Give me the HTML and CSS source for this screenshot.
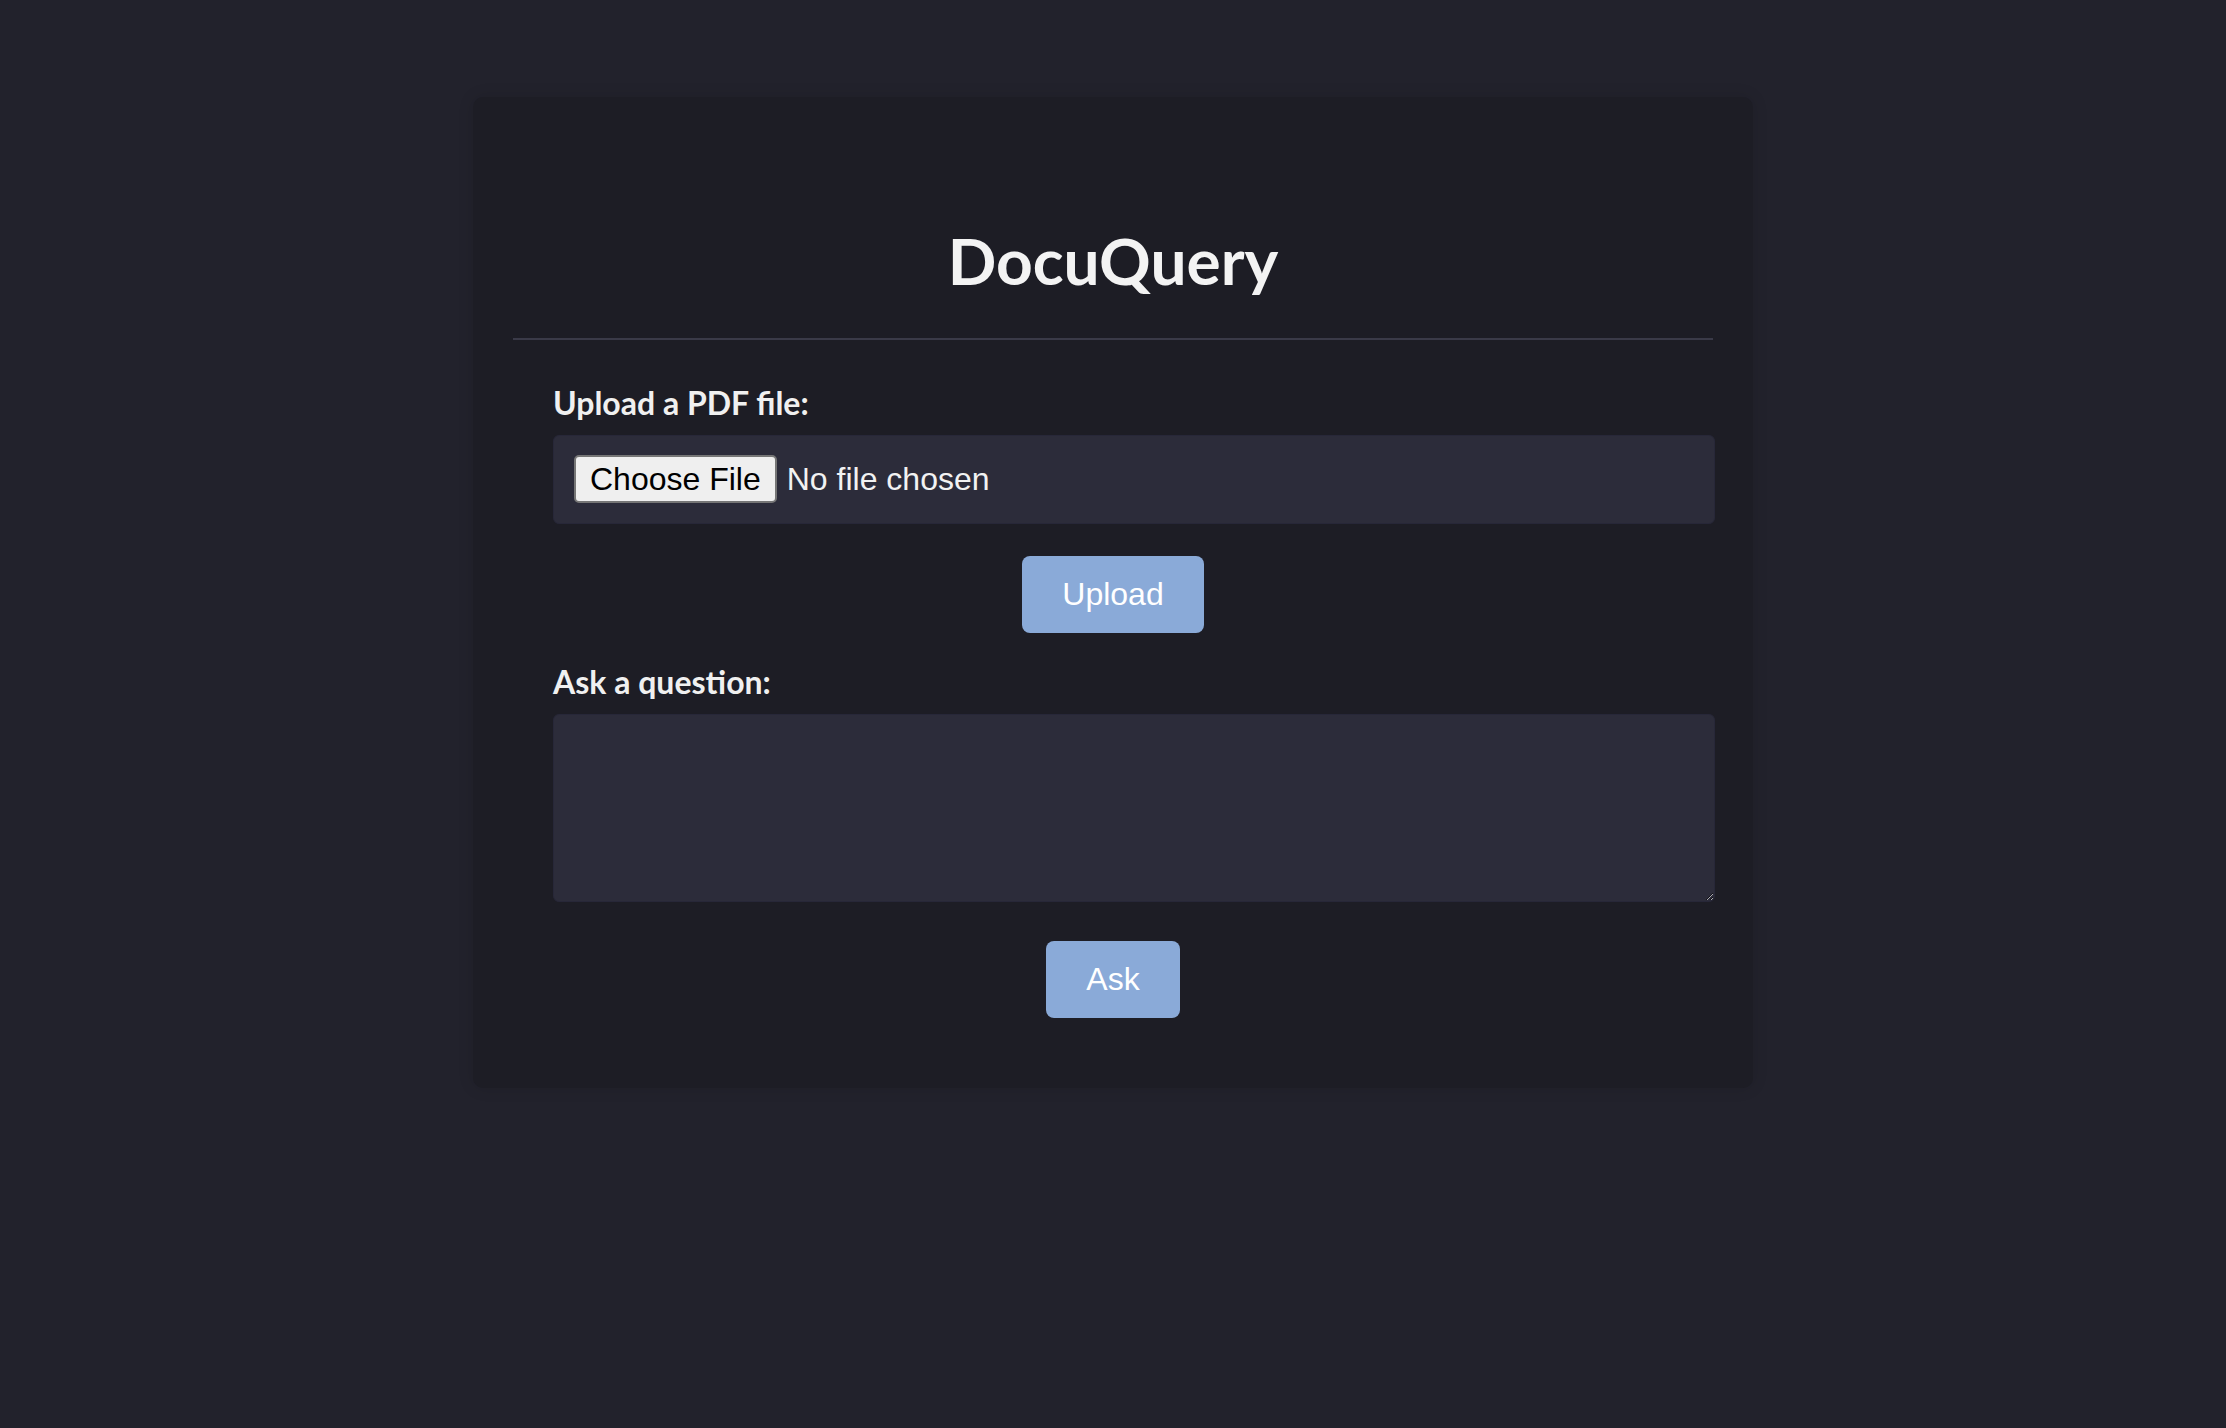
FILE: index.html
```html
<!DOCTYPE html>
<html lang="en">
<head>
<meta charset="utf-8">
<title>DocuQuery</title>
<link rel="stylesheet" href="styles.css">
</head>
<body>
<main class="card">
  <h1 class="title">DocuQuery</h1>
  <hr class="divider">
  <form class="form">
    <label class="label" for="pdf">Upload a PDF file:</label>
    <input class="file" type="file" id="pdf" accept="application/pdf">
    <div class="actions actions-upload"><button type="button" class="btn">Upload</button></div>
    <label class="label label-ask" for="q">Ask a question:</label>
    <textarea class="question" id="q"></textarea>
    <div class="actions actions-ask"><button type="button" class="btn">Ask</button></div>
  </form>
</main>
</body>
</html>
```
FILE: styles.css
```css
html, body {
  margin: 0;
  padding: 0;
}
body {
  background: #22222c;
  font-family: "Lato", "Liberation Sans", sans-serif;
  color: #f2f2f2;
  padding-top: 97px;
  min-height: 1428px;
  box-sizing: border-box;
}
.card {
  width: 1280px;
  margin: 0 auto;
  box-sizing: border-box;
  background: #1d1d25;
  border-radius: 10px;
  padding: 0 40px 70px;
  box-shadow: 0 0 16px rgba(0, 0, 0, 0.12);
  overflow: hidden;
}
.title {
  margin: 0;
  padding-top: 126px;
  font-size: 64px;
  line-height: 1.2;
  font-weight: 700;
  text-align: center;
  color: #f3f3f3;
}
.divider {
  margin: 38px 0 0;
  border: 0;
  height: 2px;
  background: #3a3a48;
}
.form {
  padding: 0 40px;
}
.label {
  display: block;
  margin-top: 45px;
  font-size: 32px;
  line-height: 36px;
  font-weight: 700;
  color: #f0f0f0;
}
.label-ask {
  margin-top: 31px;
}
.file {
  display: block;
  margin-top: 14px;
  width: calc(100% + 42px);
  box-sizing: border-box;
  padding: 19px 20px 20px;
  background: #2c2c3a;
  border: 1px solid #272738;
  border-radius: 6px;
  font-family: "Liberation Sans", Arial, sans-serif;
  font-size: 32px;
  line-height: 32px;
  color: #f2f2f2;
}
.file::file-selector-button {
  font-family: "Liberation Sans", Arial, sans-serif;
  font-size: 32px;
  line-height: 36px;
  height: 48px;
  padding: 0 14px;
  margin: 0 10px 0 0;
  background: #efefef;
  color: #000;
  border: 2px solid #767676;
  border-radius: 5px;
}
.question {
  display: block;
  margin-top: 14px;
  width: calc(100% + 42px);
  height: 188px;
  box-sizing: border-box;
  padding: 20px;
  background: #2c2c3a;
  border: 1px solid #272738;
  border-radius: 6px;
  color: #f2f2f2;
  font-family: "Liberation Sans", Arial, sans-serif;
  font-size: 28px;
  resize: vertical;
}
.actions {
  display: flex;
  justify-content: center;
}
.actions-upload {
  margin-top: 32px;
}
.actions-ask {
  margin-top: 39px;
}
.btn {
  font-family: "Liberation Sans", Arial, sans-serif;
  font-size: 32px;
  line-height: 37px;
  padding: 20px 40px;
  background: #8aaad8;
  color: #ffffff;
  border: 0;
  border-radius: 8px;
  cursor: pointer;
}
```
